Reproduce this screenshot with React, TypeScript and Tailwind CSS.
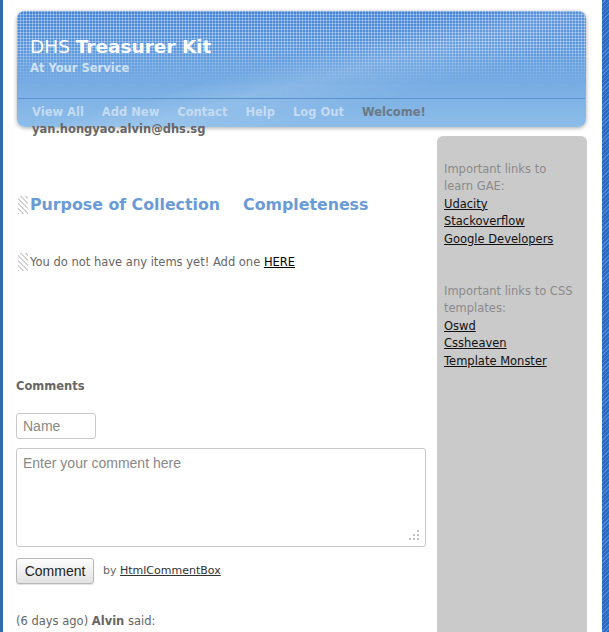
import React from 'react';

const NAV = ['View All', 'Add New', 'Contact', 'Help', 'Log Out'];

const Hatch: React.FC = () => (
  <span className="block w-[10px] h-[18px] shrink-0 [background-image:repeating-linear-gradient(45deg,#d2d2d2_0px,#d2d2d2_1px,transparent_1px,transparent_3.5px)]" />
);

const App: React.FC = () => {
  return (
    <div className="flex min-h-[632px] font-['DejaVu_Sans',Verdana,sans-serif]">
      {/* left edge */}
      <div className="w-[3px] shrink-0 bg-[#306ca8]" />

      <div className="w-[599px] shrink-0 bg-white flex flex-col">
        {/* HEADER */}
        <div className="pt-[11px] pl-[14px]">
          <div className="relative w-[569px] h-[116px] rounded-[8px] overflow-hidden shadow-[0_1px_4px_rgba(0,0,0,0.35)] bg-[linear-gradient(to_bottom,#4584d6_0%,#5c98dd_35%,#79aee4_65%,#8dbde9_100%)]">
            <div className="absolute inset-0 [background-image:linear-gradient(to_right,rgba(255,255,255,0.32)_1px,transparent_1px),linear-gradient(to_bottom,rgba(255,255,255,0.32)_1px,transparent_1px)] [background-size:3px_3px] [mask-image:linear-gradient(to_bottom,black_0%,black_30%,transparent_62%)]" />
            <div className="absolute inset-0 bg-[linear-gradient(165deg,transparent_45%,rgba(255,255,255,0.12)_55%,transparent_70%)]" />

            <div className="relative pl-[13px] pt-[25px]">
              <h1 className="text-[18.5px] leading-[22px] text-white">
                DHS <span className="font-bold">Treasurer Kit</span>
              </h1>
              <div className="mt-[2px] text-[11.5px] leading-[16px] font-bold text-[#cfe2f6]">At Your Service</div>
            </div>

            <div className="relative mt-[22px] mx-px border-t border-[#5b91cd]">
              <ul className="flex gap-[18px] pl-[14px] pt-[5px] text-[11.5px] leading-[16px] font-bold">
                {NAV.map((item) => (
                  <li key={item} className="text-[#c4dbf2]">{item}</li>
                ))}
                <li className="text-[#6c7886]">Welcome!</li>
              </ul>
            </div>
          </div>
        </div>

        <div className="relative z-10 -mt-[6px] pl-[29px] text-[11.5px] leading-[16px] font-bold text-[#666]">
          yan.hongyao.alvin@dhs.sg
        </div>

        {/* BODY */}
        <div className="flex flex-1 gap-[11px] pl-[13px] -mt-px">
          <div className="w-[410px] shrink-0">
            <div className="mt-[59px] flex items-center pl-[2px]">
              <Hatch />
              <h2 className="ml-[2px] text-[15.8px] leading-[20px] font-bold text-[#6b9bd6]">Purpose of Collection</h2>
              <h2 className="ml-[23px] text-[15.8px] leading-[20px] font-bold text-[#6b9bd6]">Completeness</h2>
            </div>

            <div className="mt-[38px] flex items-center pl-[2px]">
              <Hatch />
              <p className="ml-[2px] text-[11.5px] leading-[18px] text-[#666]">
                You do not have any items yet! Add one <a className="text-black underline">HERE</a>
              </p>
            </div>

            <h3 className="mt-[107px] text-[11.5px] leading-[16px] font-bold text-[#666]">Comments</h3>

            <input
              placeholder="Name"
              className="mt-[19px] block w-[80px] h-[26px] px-[6px] rounded-[3px] border border-[#c8c8c8] font-['Liberation_Sans',Arial,sans-serif] text-[14px] placeholder:text-[#888] outline-none"
            />

            <div className="relative mt-[9px] w-[410px] h-[99px]">
              <textarea
                placeholder="Enter your comment here"
                className="block w-full h-full resize-none px-[6px] pt-[5px] rounded-[3px] border border-[#c8c8c8] font-['Liberation_Sans',Arial,sans-serif] text-[14px] leading-[18px] placeholder:text-[#888] outline-none"
              />
              <svg className="absolute right-[6px] bottom-[6px]" width="12" height="12" viewBox="0 0 12 12">
                {[
                  [10, 2],
                  [6, 6], [10, 6],
                  [2, 10], [6, 10], [10, 10],
                ].map(([cx, cy]) => (
                  <circle key={`${cx}-${cy}`} cx={cx} cy={cy} r="1.1" fill="#b4b4b4" />
                ))}
              </svg>
            </div>

            <div className="mt-[11px] flex items-center">
              <button className="w-[78px] h-[26px] rounded-[3px] border border-[#b8b8b8] bg-[linear-gradient(to_bottom,#fdfdfd,#e2e2e2)] shadow-[0_1px_1px_rgba(0,0,0,0.12)] font-['Liberation_Sans',Arial,sans-serif] text-[14px] text-[#222]">
                Comment
              </button>
              <span className="ml-[9px] text-[11px] text-[#666]">
                by <a className="text-[#333] underline">HtmlCommentBox</a>
              </span>
            </div>

            <p className="mt-[29px] text-[11.5px] leading-[16px] text-[#666]">
              (6 days ago) <span className="font-bold">Alvin</span> said:
            </p>
          </div>

          {/* SIDEBAR */}
          <aside className="w-[150px] shrink-0 bg-[#cacaca] rounded-t-[6px] pl-[7px] pt-[25px] text-[11.5px] leading-[17.4px]">
            <p className="text-[#8a8a8a]">Important links to<br />learn GAE:</p>
            <ul className="text-[#111]">
              <li><a className="underline">Udacity</a></li>
              <li><a className="underline">Stackoverflow</a></li>
              <li><a className="underline">Google Developers</a></li>
            </ul>
            <p className="mt-[35px] text-[#8a8a8a]">Important links to CSS<br />templates:</p>
            <ul className="text-[#111]">
              <li><a className="underline">Oswd</a></li>
              <li><a className="underline">Cssheaven</a></li>
              <li><a className="underline">Template Monster</a></li>
            </ul>
          </aside>
        </div>
      </div>

      {/* right edge */}
      <div className="flex-1 bg-[repeating-linear-gradient(135deg,#2a69bf_0px,#2a69bf_2px,#4d8ad6_2px,#4d8ad6_3px)]" />
    </div>
  );
};

export default App;
